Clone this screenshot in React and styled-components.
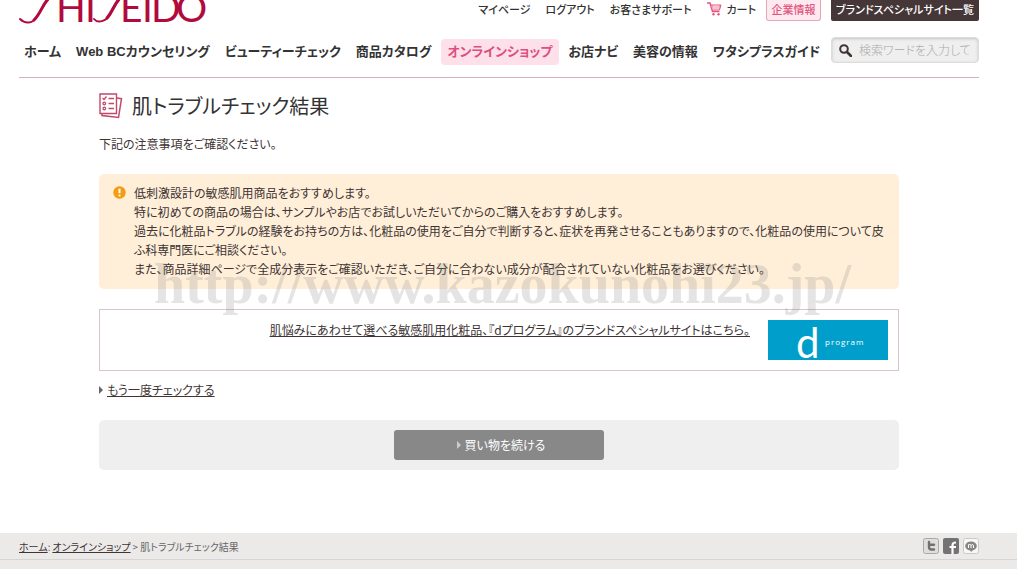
import React from "react";
import styled, { createGlobalStyle } from "styled-components";

const GlobalStyle = createGlobalStyle`
  *, *::before, *::after { box-sizing: border-box; }
  body {
    margin: 0;
    background: #fff;
    color: #403434;
    font-family: "Noto Sans CJK JP", "Liberation Sans", sans-serif;
    font-feature-settings: "palt";
    font-size: 12px;
    line-height: 19px;
  }
  a { color: inherit; }
  h1, p, ul, ol { margin: 0; padding: 0; }
  ul, ol { list-style: none; }
`;

const Shell = styled.div`
  padding: 0 38px 0 19px;
`;

const Header = styled.header`
  border-bottom: 1px solid #dcb0bc;
  height: 78px;
  white-space: nowrap;
`;

const TopRow = styled.div`
  display: flex;
  justify-content: space-between;
  align-items: flex-start;
  height: 37px;
`;

const Logo = styled.a`
  display: block;
  height: 26px;
  svg { display: block; }
`;

const Utility = styled.nav`
  display: flex;
  align-items: flex-start;
  font-size: 11px;
  line-height: 18px;
`;

const UtilityLink = styled.a`
  display: flex;
  align-items: center;
  gap: 5px;
  margin-right: ${(p) => p.$gap || 15}px;
  color: #333;
  font-weight: 500;
  text-decoration: none;
`;

const CompanyLink = styled.a`
  width: 55px;
  height: 21px;
  margin-right: 10px;
  border: 1px solid #eda3b6;
  border-top: 0;
  border-radius: 0 0 3px 3px;
  background: #fdeaf0;
  color: #e3557f;
  font-weight: 500;
  text-align: center;
  text-decoration: none;
`;

const BrandLink = styled.a`
  width: 148px;
  height: 21px;
  border-radius: 0 0 2px 2px;
  background: #453637;
  color: #fff;
  font-weight: 500;
  text-align: center;
  text-decoration: none;
`;

const NavRow = styled.div`
  display: flex;
  justify-content: space-between;
  align-items: flex-start;
`;

const MainNav = styled.nav`
  display: flex;
  align-items: center;
  padding-top: 2px;
`;

const NavLink = styled.a`
  height: 26px;
  padding: 0 ${(p) => (p.$active ? 6 : 5)}px;
  margin-right: 5px;
  border-radius: 4px;
  background: ${(p) => (p.$active ? "#fde0e9" : "transparent")};
  color: ${(p) => (p.$active ? "#de4f80" : "#333")};
  font-family: "Liberation Sans", "Noto Sans CJK JP", sans-serif;
  font-size: 13px;
  font-weight: 700;
  line-height: 26px;
  text-decoration: none;
`;

const Search = styled.label`
  display: flex;
  align-items: center;
  gap: 7px;
  width: 148px;
  height: 26px;
  padding: 0 8px 0 7px;
  border: 1px solid #dcdcdc;
  border-radius: 4px;
  background: #efefef;
  box-shadow: inset 0 1px 3px #c4c4c4;
`;

const SearchInput = styled.input`
  flex: 1;
  min-width: 0;
  padding: 0;
  border: 0;
  outline: 0;
  background: transparent;
  color: #403434;
  font: 300 12px/20px "Noto Sans CJK JP", sans-serif;
  font-feature-settings: "palt";
  &::placeholder { color: #aaa; opacity: 1; }
`;

const Content = styled.main`
  position: relative;
  max-width: 800px;
  margin: 0 auto;
  padding-top: 14px;
`;

const Title = styled.h1`
  display: flex;
  align-items: center;
  gap: 9px;
  color: #333;
  font-size: 20px;
  font-weight: 400;
  line-height: 28px;
`;

const Intro = styled.p`
  margin-top: 14px;
`;

const Notice = styled.section`
  display: flex;
  gap: 8px;
  margin-top: 21px;
  padding: 9px 14px 11px;
  border-radius: 5px;
  background: #ffefd9;
  svg { flex: none; margin-top: 2px; }
`;

const Promo = styled.section`
  display: flex;
  justify-content: flex-end;
  gap: 18px;
  height: 62px;
  margin-top: 20px;
  padding: 10px;
  border: 1px solid #dcc2cd;
`;

const Banner = styled.a`
  flex: none;
  display: flex;
  align-items: flex-end;
  width: 120px;
  height: 40px;
  padding-left: 28px;
  background: #009fcb;
  color: #fff;
  text-decoration: none;
`;

const BannerInitial = styled.span`
  width: 29px;
  font: 400 42px/36px Lato, sans-serif;
`;

const BannerWord = styled.span`
  align-self: center;
  padding-top: 4px;
  font: 400 8px/12px "Open Sans", sans-serif;
  letter-spacing: 1px;
`;

const Again = styled.p`
  display: flex;
  align-items: center;
  gap: 4px;
  margin-top: 9px;
`;

const Arrow = styled.span`
  border: solid transparent;
  border-width: 4px 0 4px 4px;
  border-left-color: ${(p) => p.$color};
`;

const ActionBar = styled.div`
  display: flex;
  justify-content: center;
  margin: 21px 0 63px;
  padding: 10px;
  border-radius: 5px;
  background: #efefef;
`;

const ContinueButton = styled.button`
  display: flex;
  align-items: center;
  justify-content: center;
  gap: 4px;
  width: 210px;
  height: 30px;
  padding: 0 0 1px 4px;
  border: 0;
  border-radius: 3px;
  background: #888;
  color: #fff;
  font: inherit;
  font-feature-settings: inherit;
`;

const Watermark = styled.div`
  position: absolute;
  top: 174px;
  left: 55px;
  color: rgba(120, 120, 120, 0.2);
  font: 700 56px/64px "Liberation Serif", serif;
  white-space: nowrap;
  pointer-events: none;
`;

const Footer = styled.footer`
  min-height: 36px;
  background: #ebeae9;
`;

const FooterRow = styled.div`
  display: flex;
  align-items: center;
  justify-content: space-between;
  height: 27px;
  padding: 0 38px 0 19px;
  border-bottom: 1px solid #d5d5d5;
`;

const Crumbs = styled.ol`
  display: flex;
  gap: 2px;
  font-size: 10px;
  color: #666;
  a { color: #403434; }
`;

const Social = styled.div`
  display: flex;
  gap: 4px;
  a, svg { display: block; }
`;

const navItems = [
  "ホーム",
  "Web BCカウンセリング",
  "ビューティーチェック",
  "商品カタログ",
  "オンラインショップ",
  "お店ナビ",
  "美容の情報",
  "ワタシプラスガイド",
];

function BrandMark() {
  return (
    <svg width="190" height="26" viewBox="0 0 190 26" role="img" aria-label="SHISEIDO">
      <g fill="none" stroke="#b10a3c" strokeLinecap="round">
        <path d="M1 19C6 24 13 24 18 17C23 10 24 3 32 -3" strokeWidth="2" />
        <path d="M15 20C22 13 24 3 31 -3" strokeWidth="3" />
        <path d="M75 19C79 24 87 21 91 15C95 8 97 2 103 -3" strokeWidth="2" />
        <path d="M88 18C94 11 96 2 102 -3" strokeWidth="3" />
      </g>
      <g fill="#b10a3c" fontFamily="Lato, sans-serif" fontSize="39" fontWeight="400">
        <text x="37" y="22">H</text>
        <text x="66" y="22">I</text>
        <text x="101" y="22">E</text>
        <text x="123" y="22">I</text>
        <text x="132" y="22">D</text>
        <text x="157" y="22">O</text>
      </g>
    </svg>
  );
}

function CartIcon() {
  return (
    <svg width="15" height="14" viewBox="0 0 15 14" fill="none" stroke="#e3557f">
      <path d="M0 1H3L5.500 9.500H12.500" strokeWidth="1.500" />
      <path d="M4 3H14L12.500 8H5.500" fill="#f3a9bd" strokeWidth="1" />
      <path d="M7 3V8M9 3V8M11 3V8" stroke="#fff" strokeWidth=".6" />
      <circle cx="6.500" cy="12.300" r="1.200" fill="#e3557f" stroke="none" />
      <circle cx="11.500" cy="12.300" r="1.200" fill="#e3557f" stroke="none" />
    </svg>
  );
}

function SearchIcon() {
  return (
    <svg width="13" height="13" viewBox="0 0 13 13" fill="none" stroke="#403434">
      <circle cx="5" cy="5" r="3.800" strokeWidth="2" />
      <path d="M8 8L12 12" strokeWidth="2.600" strokeLinecap="round" />
    </svg>
  );
}

function ChecklistIcon() {
  return (
    <svg width="24" height="26" viewBox="0 0 24 26" fill="none" stroke="#bf4a6b">
      <path d="M18 5L22.500 5.700L19.500 24.500L3 22.500V21" strokeWidth="1.500" />
      <path d="M1 1H17.500V20.500H1Z" fill="#fff" strokeWidth="1.400" />
      <path d="M3.500 5L5 6.500L7.500 3.500M9.500 5.500H15M9.500 10.500H15M9.500 15.500H15" strokeWidth="1.300" />
      <circle cx="5.300" cy="10.500" r="1.300" strokeWidth="1.300" />
      <circle cx="5.300" cy="15.500" r="1.300" strokeWidth="1.300" />
    </svg>
  );
}

function AlertIcon() {
  return (
    <svg width="13" height="15" viewBox="0 0 13 15">
      <circle cx="6.500" cy="7.500" r="6.200" fill="#f39c12" />
      <path d="M6.500 3.800V8.300M6.500 9.700V11.300" stroke="#fff" strokeWidth="2" />
    </svg>
  );
}

function TwitterIcon() {
  return (
    <svg width="16" height="16" viewBox="0 0 16 16">
      <rect x=".5" y=".5" width="15" height="15" rx="2" fill="#dedede" stroke="#a9a9a9" />
      <path d="M6 4V9Q6 11.500 8.500 11.500H11M6 6.800H11" fill="none" stroke="#707070" strokeWidth="2.400" strokeLinecap="round" />
    </svg>
  );
}

function FacebookIcon() {
  return (
    <svg width="16" height="16" viewBox="0 0 16 16">
      <rect width="16" height="16" rx="2" fill="#737373" />
      <path d="M9.500 16V7Q9.500 4.500 13 4.500M6.500 9H13" fill="none" stroke="#fff" strokeWidth="2.200" />
    </svg>
  );
}

function MixiIcon() {
  return (
    <svg width="16" height="16" viewBox="0 0 16 16">
      <rect x=".5" y=".5" width="15" height="15" rx="2" fill="#f7f7f7" stroke="#c9c9c9" />
      <ellipse cx="8" cy="8" rx="5.800" ry="4.600" fill="#858585" />
      <path d="M7 12L8 14L10 12Z" fill="#858585" />
      <path d="M5.500 10V6.500M5.500 7Q8 5.500 8 7.500V10M8 7.500Q10.500 5.500 10.500 7.500V10" fill="none" stroke="#fff" />
    </svg>
  );
}

export default function App() {
  return (
    <>
      <GlobalStyle />
      <Shell>
        <Header>
          <TopRow>
            <Logo href="#" aria-label="SHISEIDO"><BrandMark /></Logo>
            <Utility>
              <UtilityLink href="#">マイページ</UtilityLink>
              <UtilityLink href="#">ログアウト</UtilityLink>
              <UtilityLink href="#">お客さまサポート</UtilityLink>
              <UtilityLink href="#" $gap={10}><CartIcon />カート</UtilityLink>
              <CompanyLink href="#">企業情報</CompanyLink>
              <BrandLink href="#">ブランドスペシャルサイト一覧</BrandLink>
            </Utility>
          </TopRow>
          <NavRow>
            <MainNav>
              {navItems.map((item) => (
                <NavLink key={item} href="#" $active={item === "オンラインショップ"}>{item}</NavLink>
              ))}
            </MainNav>
            <Search>
              <SearchIcon />
              <SearchInput type="text" aria-label="検索" placeholder="検索ワードを入力してください" />
            </Search>
          </NavRow>
        </Header>
        <Content>
          <Title><ChecklistIcon />肌トラブルチェック結果</Title>
          <Intro>下記の注意事項をご確認ください。</Intro>
          <Notice>
            <AlertIcon />
            <div>
              <p>低刺激設計の敏感肌用商品をおすすめします。</p>
              <p>特に初めての商品の場合は、サンプルやお店でお試しいただいてからのご購入をおすすめします。</p>
              <p>過去に化粧品トラブルの経験をお持ちの方は、化粧品の使用をご自分で判断すると、症状を再発させることもありますので、化粧品の使用について皮ふ科専門医にご相談ください。</p>
              <p>また、商品詳細ページで全成分表示をご確認いただき、ご自分に合わない成分が配合されていない化粧品をお選びください。</p>
            </div>
          </Notice>
          <Promo>
            <a href="#">肌悩みにあわせて選べる敏感肌用化粧品、『dプログラム』のブランドスペシャルサイトはこちら。</a>
            <Banner href="#">
              <BannerInitial>d</BannerInitial>
              <BannerWord>program</BannerWord>
            </Banner>
          </Promo>
          <Again><Arrow $color="#666" /><a href="#">もう一度チェックする</a></Again>
          <ActionBar>
            <ContinueButton type="button"><Arrow $color="#ccc" />買い物を続ける</ContinueButton>
          </ActionBar>
          <Watermark>http://www.kazokunohi23.jp/</Watermark>
        </Content>
      </Shell>
      <Footer>
        <FooterRow>
          <Crumbs>
            <li><a href="#">ホーム</a>:</li>
            <li><a href="#">オンラインショップ</a></li>
            <li>&gt;</li>
            <li>肌トラブルチェック結果</li>
          </Crumbs>
          <Social>
            <a href="#" aria-label="Twitter"><TwitterIcon /></a>
            <a href="#" aria-label="Facebook"><FacebookIcon /></a>
            <a href="#" aria-label="mixi"><MixiIcon /></a>
          </Social>
        </FooterRow>
      </Footer>
    </>
  );
}
